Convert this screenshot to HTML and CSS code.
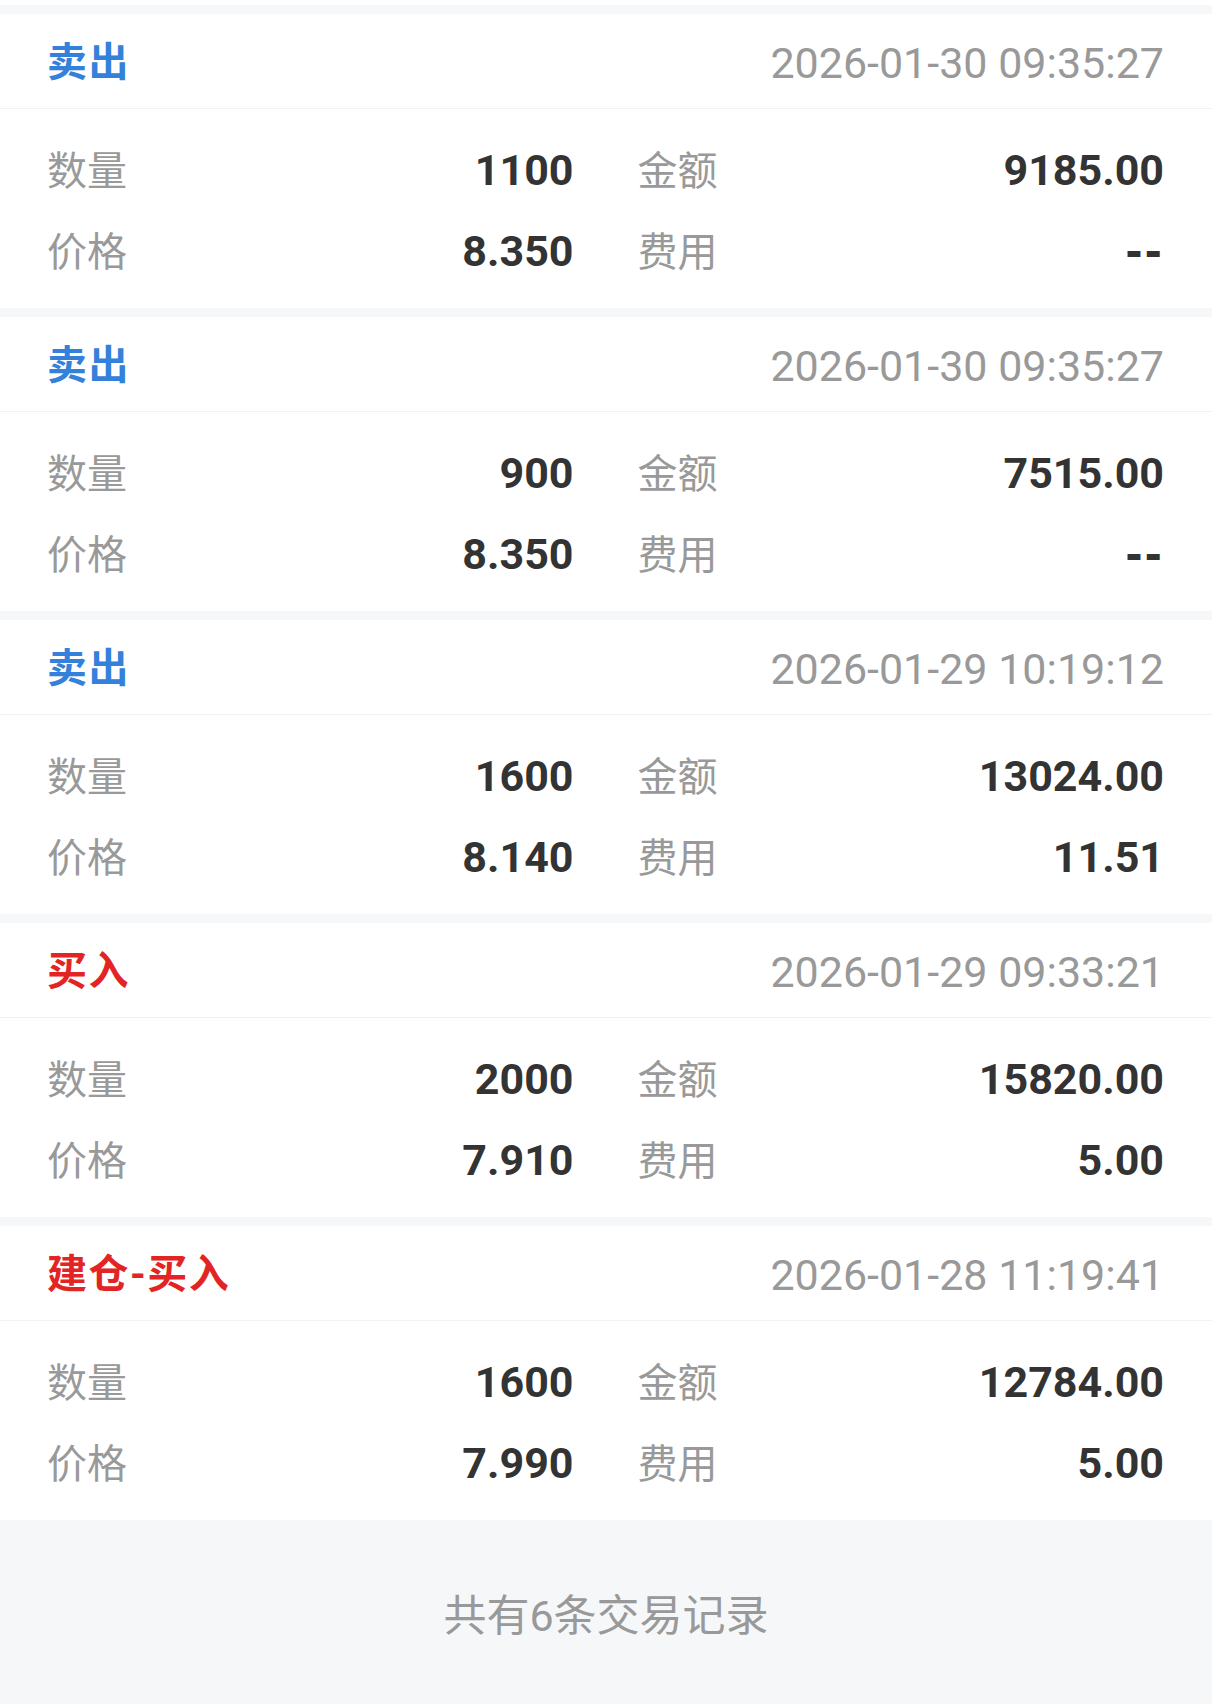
FILE: index.html
```html
<!DOCTYPE html>
<html lang="zh-CN">
<head>
  <meta charset="UTF-8" />
  <meta name="viewport" content="width=1212" />
  <title>交易记录</title>
  <link rel="stylesheet" href="styles.css">
</head>
<body>
  <div class="list">
    <div class="card-tail"></div>

    <div class="record">
      <div class="record-head">
        <span class="type sell">卖出</span>
        <span class="time">2026-01-30 09:35:27</span>
      </div>
      <div class="record-body">
        <div class="field"><span class="label">数量</span><span class="value">1100</span></div>
        <div class="field"><span class="label">金额</span><span class="value">9185.00</span></div>
        <div class="field"><span class="label">价格</span><span class="value">8.350</span></div>
        <div class="field"><span class="label">费用</span><span class="value empty">--</span></div>
      </div>
    </div>

    <div class="record">
      <div class="record-head">
        <span class="type sell">卖出</span>
        <span class="time">2026-01-30 09:35:27</span>
      </div>
      <div class="record-body">
        <div class="field"><span class="label">数量</span><span class="value">900</span></div>
        <div class="field"><span class="label">金额</span><span class="value">7515.00</span></div>
        <div class="field"><span class="label">价格</span><span class="value">8.350</span></div>
        <div class="field"><span class="label">费用</span><span class="value empty">--</span></div>
      </div>
    </div>

    <div class="record">
      <div class="record-head">
        <span class="type sell">卖出</span>
        <span class="time">2026-01-29 10:19:12</span>
      </div>
      <div class="record-body">
        <div class="field"><span class="label">数量</span><span class="value">1600</span></div>
        <div class="field"><span class="label">金额</span><span class="value">13024.00</span></div>
        <div class="field"><span class="label">价格</span><span class="value">8.140</span></div>
        <div class="field"><span class="label">费用</span><span class="value">11.51</span></div>
      </div>
    </div>

    <div class="record">
      <div class="record-head">
        <span class="type buy">买入</span>
        <span class="time">2026-01-29 09:33:21</span>
      </div>
      <div class="record-body">
        <div class="field"><span class="label">数量</span><span class="value">2000</span></div>
        <div class="field"><span class="label">金额</span><span class="value">15820.00</span></div>
        <div class="field"><span class="label">价格</span><span class="value">7.910</span></div>
        <div class="field"><span class="label">费用</span><span class="value">5.00</span></div>
      </div>
    </div>

    <div class="record">
      <div class="record-head">
        <span class="type buy">建仓-买入</span>
        <span class="time">2026-01-28 11:19:41</span>
      </div>
      <div class="record-body">
        <div class="field"><span class="label">数量</span><span class="value">1600</span></div>
        <div class="field"><span class="label">金额</span><span class="value">12784.00</span></div>
        <div class="field"><span class="label">价格</span><span class="value">7.990</span></div>
        <div class="field"><span class="label">费用</span><span class="value">5.00</span></div>
      </div>
    </div>
  </div>

  <div class="footer">共有6条交易记录</div>
</body>
</html>
```

FILE: styles.css
```css
* {
    margin: 0;
    padding: 0;
    box-sizing: border-box;
}

body {
    font-family: Roboto, "Noto Sans CJK SC", sans-serif;
    font-size: 42px;
    background: #f6f7f9;
    color: #333;
}

.list {
    display: flex;
    flex-direction: column;
    gap: 9px;
}

/* bottom of the record scrolled out above */
.card-tail {
    height: 5px;
    background: #fff;
}

.record {
    background: #fff;
}

.record-head {
    height: 95px;
    padding: 3px 48px 0 47px;
    display: flex;
    align-items: center;
    justify-content: space-between;
    border-bottom: 1px solid #f2f2f2;
}

.type {
    font-size: 40px;
    font-weight: bold;
    line-height: 60px;
    letter-spacing: 1.5px;
}

.sell {
    color: #3381da;
}

.buy {
    color: #e32424;
}

.time {
    font-size: 43px;
    color: #999;
    line-height: 60px;
}

.record-body {
    display: grid;
    grid-template-columns: 1fr 1fr;
    column-gap: 64px;
    row-gap: 19px;
    padding: 30px 48px 26px 47px;
}

.field {
    display: flex;
    justify-content: space-between;
    align-items: center;
    height: 62px;
}

.label {
    font-size: 40px;
    padding-bottom: 5px;
    color: #999;
}

.value {
    font-size: 43px;
    font-weight: bold;
    color: #333;
}

.value.empty {
    font-family: "DejaVu Sans", sans-serif;
    font-size: 42px;
    letter-spacing: 2px;
}

.footer {
    height: 184px;
    padding-top: 66px;
    font-size: 43px;
    line-height: 60px;
    text-align: center;
    color: #999;
    background: #f6f7f9;
}
```
